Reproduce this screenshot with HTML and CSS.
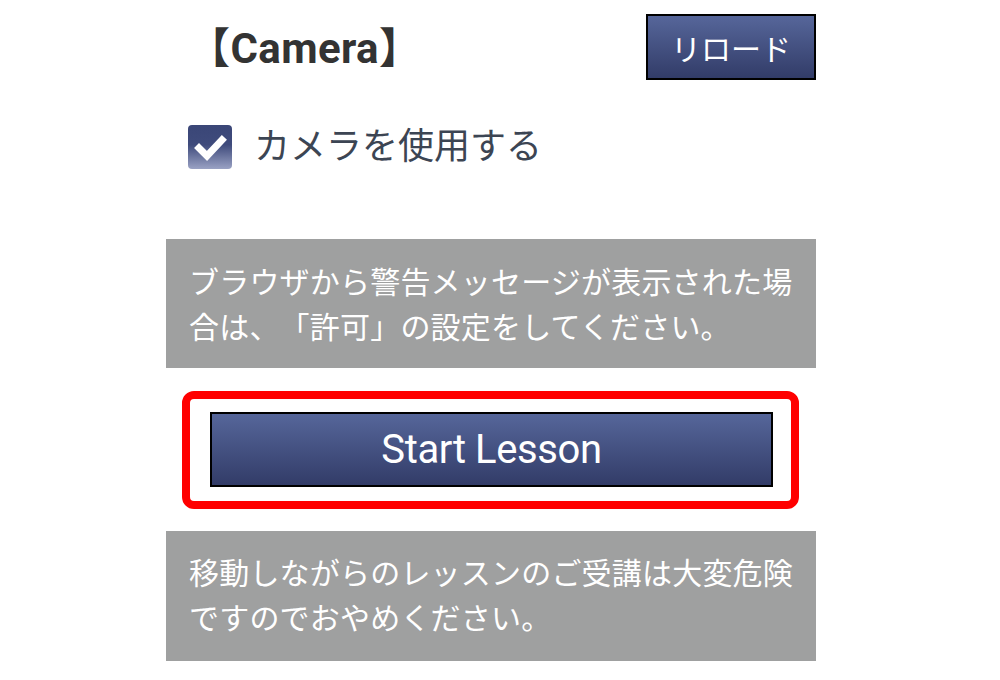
FILE: index.html
```html
<!DOCTYPE html>
<html lang="ja">
<head>
<meta charset="utf-8">
<title>Camera</title>
<link rel="stylesheet" href="styles.css">
</head>
<body>
<div class="page">
  <div class="header">
    <h1 class="title">【Camera】</h1>
    <button class="btn reload">リロード</button>
  </div>
  <label class="check-row">
    <span class="checkbox">
      <svg viewBox="0 0 44 44" width="44" height="44"><path d="M11 23 L19 31 L34 15" fill="none" stroke="#fff" stroke-width="7" stroke-linecap="square" stroke-linejoin="miter"/></svg>
    </span>
    <span class="check-label">カメラを使用する</span>
  </label>
  <div class="notice">ブラウザから警告メッセージが表示された場合は、「許可」の設定をしてください。</div>
  <div class="highlight">
    <button class="btn start">Start Lesson</button>
  </div>
  <div class="notice notice-2">移動しながらのレッスンのご受講は大変危険ですのでおやめください。</div>
</div>
</body>
</html>
```

FILE: styles.css
```css
html, body {
  margin: 0;
  padding: 0;
  background: #fff;
}
body {
  font-family: Roboto, "Noto Sans CJK JP", sans-serif;
  text-spacing-trim: space-all;
}
.page {
  width: 650px;
  margin-left: 166px;
  display: flex;
  flex-direction: column;
}
.header {
  margin-top: 14px;
  height: 66px;
  display: flex;
  align-items: center;
  justify-content: space-between;
}
.title {
  margin: 0 0 6px 22px;
  font-size: 42px;
  font-weight: 700;
  color: #333;
  font-family: Roboto, "Noto Sans CJK JP", sans-serif;
  letter-spacing: 0.4px;
}
.btn {
  font-family: Roboto, "Noto Sans CJK JP", sans-serif;
  color: #fff;
  background: linear-gradient(to bottom, #56669a, #323c68);
  border: 2px solid #000;
  padding: 0;
  cursor: pointer;
}
.reload {
  width: 170px;
  height: 66px;
  font-size: 30px;
}
.check-row {
  margin-top: 45px;
  margin-left: 22px;
  display: flex;
  align-items: center;
  height: 44px;
}
.checkbox {
  width: 44px;
  height: 44px;
  border-radius: 4px;
  background: linear-gradient(to bottom, #3a4677 0%, #3f4b7c 45%, #9aa2c4 100%);
  display: block;
}
.checkbox svg {
  display: block;
}
.check-label {
  margin-left: 22px;
  margin-bottom: 8px;
  font-size: 36px;
  color: #3c4553;
  font-family: "Noto Sans CJK JP", sans-serif;
}
.notice {
  margin-top: 70px;
  background: #9fa0a0;
  color: #fff;
  font-family: "Noto Sans CJK JP", sans-serif;
  font-size: 30px;
  line-height: 45px;
  padding: 19px 22px 20px 23px;
  letter-spacing: 0.2px;
}
.highlight {
  margin-top: 23px;
  margin-left: 16px;
  width: 617px;
  box-sizing: border-box;
  border: 8px solid #ff0000;
  border-radius: 12px;
  padding: 13px 18px 14px 20px;
}
.start {
  width: 563px;
  height: 75px;
  font-size: 40px;
  letter-spacing: -0.4px;
  display: block;
}
.notice-2 {
  margin-top: 22px;
  padding-top: 18px;
  padding-bottom: 22px;
}
```
